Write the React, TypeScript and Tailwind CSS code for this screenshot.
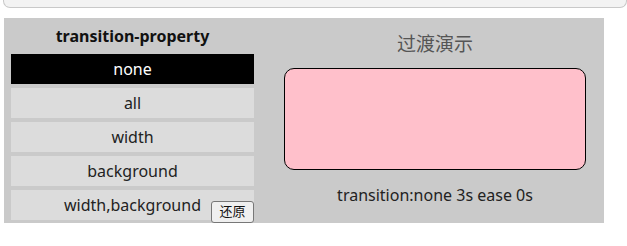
import { useState } from 'react';

const options = ['none', 'all', 'width', 'background', 'width,background'];

export default function App() {
  const [active, setActive] = useState('none');

  return (
    <div className="relative h-[246px] w-[627px] overflow-hidden bg-white font-['Noto_Sans','Noto_Sans_CJK_SC',sans-serif]">
      <div className="ml-[3px] h-[8px] rounded-b-[7px] border-x border-b border-[#c9c9c9] bg-[#f3f3f3]" />

      <div className="ml-[4px] mt-[10px] flex h-[205px] w-[600px] bg-[#cacaca]">
        <div className="relative flex w-[257px] flex-col px-[7px]">
          <div className="flex h-[36px] items-center justify-center text-[16px] font-bold text-[#111]">
            transition-property
          </div>
          <div className="flex flex-col gap-[4px]">
            {options.map(opt => (
              <button
                key={opt}
                onClick={() => setActive(opt)}
                className={
                  opt === active
                    ? 'flex h-[30px] items-center justify-center bg-black text-[16px] text-white'
                    : 'flex h-[30px] items-center justify-center bg-[#dcdcdc] text-[16px] text-[#222]'
                }
              >
                {opt}
              </button>
            ))}
          </div>
          <button className="absolute right-[7px] top-[183px] flex h-[22px] w-[43px] items-center justify-center rounded-[3px] border border-[#777] bg-[#efefef] text-[13px] text-[#111]">
            还原
          </button>
        </div>

        <div className="flex flex-1 flex-col items-center pl-[5px]">
          <div className="mt-[13px] h-[26px] text-[19px] leading-[26px] text-[#555]">过渡演示</div>
          <div className="mt-[11px] h-[102px] w-[302px] rounded-[10px] border border-black bg-[#ffc0cb]" />
          <div className="mt-[13px] text-[16px] text-[#222]">transition:{active} 3s ease 0s</div>
        </div>
      </div>
    </div>
  );
}
